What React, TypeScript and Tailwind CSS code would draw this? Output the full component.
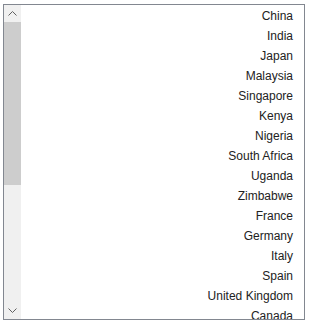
import React from 'react';

const countries = [
  'China', 'India', 'Japan', 'Malaysia', 'Singapore', 'Kenya', 'Nigeria', 'South Africa',
  'Uganda', 'Zimbabwe', 'France', 'Germany', 'Italy', 'Spain', 'United Kingdom', 'Canada',
  'Mexico', 'United States', 'Argentina', 'Brazil', 'Chile', 'Australia', 'New Zealand', 'Fiji',
  'Egypt', 'Peru', 'Russia',
];

const Chevron: React.FC<{ down?: boolean }> = ({ down }) => (
  <svg width="9" height="5" viewBox="0 0 9 5" className="block">
    <path
      d={down ? 'M0.5 0.5 L4.5 4.5 L8.5 0.5' : 'M0.5 4.5 L4.5 0.5 L8.5 4.5'}
      fill="none"
      stroke="#606060"
      strokeWidth="1"
    />
  </svg>
);

export default function App() {
  return (
    <div className="w-[311px] h-[325px] bg-white pl-[3px] pt-[4px]">
      <div className="w-[302px] h-[316px] border border-[#828790] flex bg-white overflow-hidden">
        {/* scrollbar sits on the left */}
        <div className="w-[17px] flex flex-col bg-[#f0f0f0] shrink-0">
          <div className="h-[17px] flex items-center justify-center">
            <Chevron />
          </div>
          <div className="h-[163px] bg-[#cdcdcd]"></div>
          <div className="flex-1"></div>
          <div className="h-[17px] flex items-center justify-center">
            <Chevron down />
          </div>
        </div>
        <ul className="flex-1 overflow-hidden pt-[1px] font-['Liberation_Sans',sans-serif] text-[12px] text-[#222222]">
          {countries.map((c) => (
            <li key={c} className="h-[20px] leading-[20px] text-right pr-[11px]">
              {c}
            </li>
          ))}
        </ul>
      </div>
    </div>
  );
}
